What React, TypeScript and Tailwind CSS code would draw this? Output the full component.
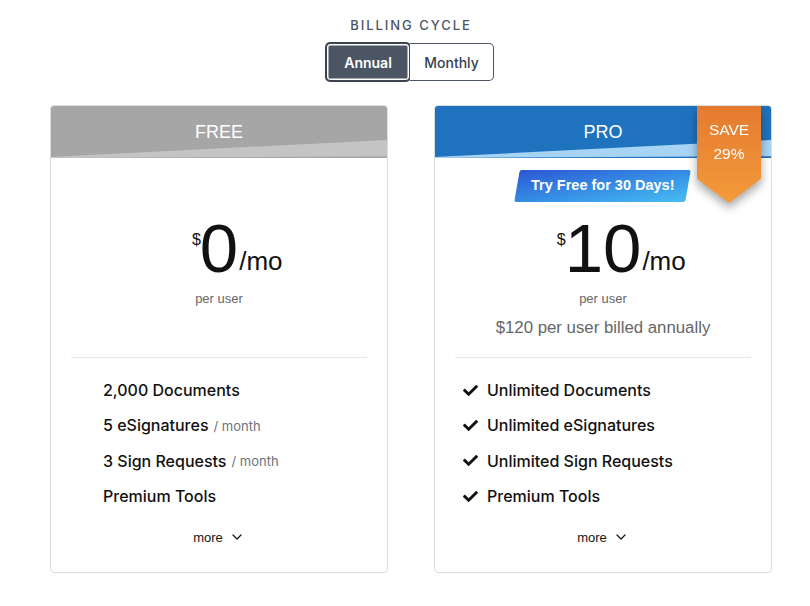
import { ChevronDown } from 'lucide-react';
import { FaCheck } from 'react-icons/fa';

type Feature = { text: string; unit?: string };

const freeFeatures: Feature[] = [
    { text: '2,000 Documents' },
    { text: '5 eSignatures', unit: '/ month' },
    { text: '3 Sign Requests', unit: '/ month' },
    { text: 'Premium Tools' },
];

const proFeatures: Feature[] = [
    { text: 'Unlimited Documents' },
    { text: 'Unlimited eSignatures' },
    { text: 'Unlimited Sign Requests' },
    { text: 'Premium Tools' },
];

const sans = "font-['Liberation_Sans',Arial,sans-serif]";
const inter = "font-['Inter','Noto_Sans',sans-serif]";

function PlanHeader({ title, pro }: { title: string; pro?: boolean }) {
    return (
        <div className={`relative h-[52px] flex items-center justify-center ${pro ? 'bg-[#1f72be]' : 'bg-[#a6a6a6]'}`}>
            <h2 className={`${sans} text-[18px] text-white leading-none`}>{title}</h2>
            {/* light wedge along the bottom edge */}
            <div
                className={`absolute inset-x-0 bottom-0 h-[18px] [clip-path:polygon(0_94%,100%_0,100%_90%,0_100%)] ${pro ? 'bg-[#a7d3f5]' : 'bg-[#c4c4c4]'}`}
            />
        </div>
    );
}

function FeatureList({ items, checks }: { items: Feature[]; checks?: boolean }) {
    return (
        <ul className="flex flex-col gap-[11.4px] pl-[28px] pt-[20px]">
            {items.map((f) => (
                <li key={f.text} className={`${inter} flex items-center h-6 text-[16px] font-medium text-[#111]`}>
                    <span className="w-6 shrink-0">
                        {checks && <FaCheck className="w-[15px] h-[15px] text-[#111]" />}
                    </span>
                    <span>{f.text}</span>
                    {f.unit && <span className="ml-[5px] text-[13px] font-normal text-[#6b7280] mt-[2px]">{f.unit}</span>}
                </li>
            ))}
        </ul>
    );
}

// the number is centred; "$" and "/mo" hang on either side of it
function Price({ amount }: { amount: string }) {
    return (
        <div className={`${sans} relative text-[#111] leading-none`}>
            <span className="absolute right-full top-[18px] text-[16px] mr-[-1px]">$</span>
            <span className="block text-[69px] leading-[70px]">{amount}</span>
            <span className="absolute left-full bottom-[10px] text-[26px] ml-[1px]">/mo</span>
        </div>
    );
}

function MoreLink() {
    return (
        <div className={`${sans} mt-auto mb-[25px] flex items-center justify-center gap-[6px] text-[13px] text-[#111]`}>
            <span>more</span>
            <ChevronDown size={16} strokeWidth={1.8} />
        </div>
    );
}

function FreeCard() {
    return (
        <div className="w-[338px] h-[468px] flex flex-col border border-[#dcdcdc] rounded-[4px] overflow-hidden bg-white">
            <PlanHeader title="FREE" />
            <div className="h-[199px] flex flex-col items-center">
                <div className="h-[32px] mt-[12px]" />
                <div className="mt-[12px]">
                    <Price amount="0" />
                </div>
                <p className={`${sans} mt-[7px] text-[13px] leading-4 text-[#666]`}>per user</p>
            </div>
            <div className="mx-[20px] h-px bg-[#e6e6e6]" />
            <FeatureList items={freeFeatures} />
            <MoreLink />
        </div>
    );
}

function ProCard() {
    return (
        <div className="relative w-[338px] h-[468px] flex flex-col border border-[#dcdcdc] rounded-[4px] overflow-hidden bg-white">
            <PlanHeader title="PRO" pro />
            <div className="h-[199px] flex flex-col items-center">
                <div className="h-[32px] mt-[12px] flex items-center px-[14px] -skew-x-[10deg] bg-gradient-to-br from-[#2d56d3] to-[#48bdf3] rounded-[2px]">
                    <span className={`${sans} skew-x-[10deg] text-[14.5px] font-bold text-white`}>Try Free for 30 Days!</span>
                </div>
                <div className="mt-[12px]">
                    <Price amount="10" />
                </div>
                <p className={`${sans} mt-[7px] text-[13px] leading-4 text-[#666]`}>per user</p>
                <p className={`${sans} mt-[11px] text-[16.8px] leading-5 text-[#666]`}>$120 per user billed annually</p>
            </div>
            <div className="mx-[20px] h-px bg-[#e6e6e6]" />
            <FeatureList items={proFeatures} checks />
            <MoreLink />

            {/* save ribbon */}
            <div className="absolute top-0 right-[10px] w-[64px] h-[97px] [filter:drop-shadow(0_5px_5px_rgba(0,0,0,0.35))]">
                <div className="w-full h-full flex flex-col items-center pt-[15px] bg-gradient-to-b from-[#e57a30] to-[#f39b3a] [clip-path:polygon(0_0,100%_0,100%_75%,50%_100%,0_75%)]">
                    <span className={`${sans} text-[15.5px] leading-[18px] text-white`}>SAVE</span>
                    <span className={`${sans} mt-[6px] text-[15.5px] leading-[18px] text-white`}>29%</span>
                </div>
            </div>
        </div>
    );
}

export default function App() {
    return (
        <div className="min-h-screen bg-white">
            <div className="ml-[50px] w-[722px] flex flex-col items-center pt-[17px]">
                <h1 className={`${inter} text-[13px] leading-4 font-medium tracking-[0.15em] text-[#4b5563]`}>
                    BILLING CYCLE
                </h1>
                <div className="mt-[9px] mr-[3px] flex items-center">
                    <button className={`${inter} w-[86px] h-[40px] rounded-[5px] border-2 border-[#3e4551] bg-[#4b5563] shadow-[inset_0_0_0_1.5px_#fff] text-[14px] font-semibold text-white`}>
                        Annual
                    </button>
                    <button className={`${inter} w-[84px] h-[38px] -ml-[1px] rounded-r-[5px] border border-[#4b5563] border-l-0 bg-white text-[14px] font-medium text-[#374151]`}>
                        Monthly
                    </button>
                </div>
                <div className="mt-[23px] w-full flex justify-between">
                    <FreeCard />
                    <ProCard />
                </div>
            </div>
        </div>
    );
}
